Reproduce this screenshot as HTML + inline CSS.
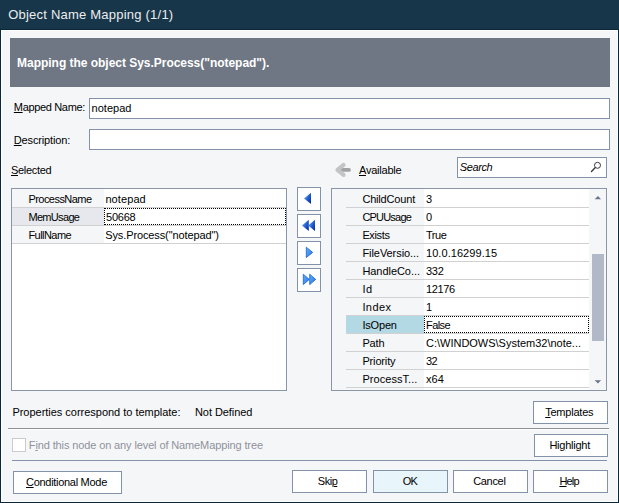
<!DOCTYPE html>
<html lang="en">
<head>
<meta charset="utf-8">
<title>Object Name Mapping (1/1)</title>
<style>
*{box-sizing:border-box;margin:0;padding:0}
html,body{width:619px;height:503px;overflow:hidden;background:#17364a}
body{position:relative;font-family:"Liberation Sans",sans-serif;font-size:11px;color:#000;line-height:13px}
.abs{position:absolute}
.t{position:absolute;white-space:nowrap;line-height:13px;height:13px}
u{text-decoration:underline;text-underline-offset:1px;text-decoration-thickness:1px}
#win{left:0;top:0;width:619px;height:503px;background:#0b283b}
#title{left:0;top:0;width:619px;height:29px;background:#17364a}
#titletx{left:9px;top:7px;font-size:13px;line-height:16px;height:16px;color:#ededed}
#body{left:1px;top:30px;width:617px;height:472px;background:#f5f6f8;border:1px solid #fff}
#banner{left:10px;top:38px;width:600px;height:49px;background:#6f7784}
#bannertx{left:18px;top:57px;color:#fff;font-weight:bold;font-size:12px}
.inp{position:absolute;background:#fff;border:1px solid #8391a9}
.btn{position:absolute;background:#fff;border:1px solid #8391a9;height:23px;text-align:left;line-height:21px;white-space:nowrap;overflow:hidden}
.sq{position:absolute;background:#fff;border:1px solid #8391a9;width:24px;height:24px;left:297px}
.sq svg{position:absolute;left:0;top:0}
.grid{position:absolute;border:1px solid #8a96a8;background:#fff;overflow:hidden}
.hl{position:absolute;height:1px;background:#d1d1d2}
.sep{position:absolute;height:1px}
.foc{position:absolute;border:1px dotted #000}
/*FIT*/
#titletx{letter-spacing:0.22px;text-indent:-0.8px}
#bannertx{letter-spacing:-0.03px;text-indent:-0.9px}
#l1{letter-spacing:-0.34px;text-indent:-0.2px}
#v1{letter-spacing:0.00px;text-indent:-0.4px}
#l2{letter-spacing:-0.15px;text-indent:-0.2px}
#l3{letter-spacing:-0.31px;text-indent:0.0px}
#l4{letter-spacing:-0.22px;text-indent:0.0px}
#srch{letter-spacing:-0.40px;text-indent:-0.2px}
#ln1{letter-spacing:-0.54px;text-indent:0.4px}
#lv1{letter-spacing:0.09px;text-indent:-0.6px}
#ln2{letter-spacing:-0.67px;text-indent:0.4px}
#lv2{letter-spacing:-0.22px;text-indent:-1.0px}
#ln3{letter-spacing:-0.54px;text-indent:0.4px}
#lv3{letter-spacing:-0.11px;text-indent:-0.8px}
#rn1{letter-spacing:-0.18px;text-indent:0.4px}
#rn2{letter-spacing:-0.80px;text-indent:0.4px}
#rn3{letter-spacing:-0.36px;text-indent:0.4px}
#rn4{letter-spacing:-0.06px;text-indent:0.4px}
#rn5{letter-spacing:-0.05px;text-indent:0.4px}
#rn6{letter-spacing:0.54px;text-indent:0.4px}
#rn7{letter-spacing:0.41px;text-indent:0.4px}
#rn8{letter-spacing:-0.18px;text-indent:0.4px}
#rn9{letter-spacing:-0.12px;text-indent:0.4px}
#rn10{letter-spacing:-0.15px;text-indent:0.4px}
#rn11{letter-spacing:0.05px;text-indent:0.4px}
#rv3{letter-spacing:-0.48px;text-indent:0.0px}
#rv4{letter-spacing:0.06px;text-indent:0.0px}
#rv5{letter-spacing:-0.27px;text-indent:0.0px}
#rv6{letter-spacing:-0.36px;text-indent:0.0px}
#rv8{letter-spacing:-0.59px;text-indent:0.0px}
#rv9{letter-spacing:-0.01px;text-indent:0.0px}
#rv10{letter-spacing:-0.72px;text-indent:0.0px}
#rv11{letter-spacing:0.09px;text-indent:0.0px}
#b1{letter-spacing:-0.02px;text-indent:0.4px}
#b2{letter-spacing:-0.07px;text-indent:0.0px}
#b3{letter-spacing:-0.12px;text-indent:-1.2px}
#btpl{letter-spacing:-0.22px;text-indent:11.2px}
#bhl{letter-spacing:-0.25px;text-indent:14.4px}
#bcm{letter-spacing:-0.29px;text-indent:12.0px}
#bskip{letter-spacing:-0.48px;text-indent:24.8px}
#bok{letter-spacing:-0.80px;text-indent:28.8px}
#bcan{letter-spacing:-0.32px;text-indent:19.2px}
#bhelp{letter-spacing:-0.80px;text-indent:25.4px}
/*ENDFIT*/
</style>
</head>
<body>
<div id="win" class="abs"></div>
<div id="title" class="abs"></div>
<div id="titletx" class="t">Object Name Mapping (1/1)</div>
<div id="body" class="abs"></div>

<div id="banner" class="abs"></div>
<div id="bannertx" class="t">Mapping the object Sys.Process("notepad").</div>

<!-- fields -->
<div class="t" id="l1" style="left:14px;top:101px"><u>M</u>apped Name:</div>
<div class="inp" style="left:89px;top:98px;width:521px;height:21px"></div>
<div class="t" id="v1" style="left:92px;top:102px">notepad</div>
<div class="t" id="l2" style="left:14px;top:134px"><u>D</u>escription:</div>
<div class="inp" style="left:89px;top:129px;width:521px;height:21px"></div>

<!-- selected header -->
<div class="t" id="l3" style="left:11px;top:164px"><u>S</u>elected</div>

<!-- available header -->
<svg class="abs" style="left:330px;top:158px" width="28" height="24" viewBox="0 0 28 24">
  <path d="M12 11.9 H19" fill="none" stroke="#a2a2a2" stroke-width="3.8" stroke-linecap="round"/>
  <path d="M13.6 6.9 L7.4 11.9 L13.6 16.9" fill="none" stroke="#c4c4c4" stroke-width="4" stroke-linecap="round" stroke-linejoin="round"/>
</svg>
<div class="t" id="l4" style="left:359px;top:164px"><u>A</u>vailable</div>
<div class="inp" style="left:457px;top:157px;width:150px;height:21px"></div>
<div class="t" id="srch" style="left:460px;top:161px;font-style:italic">Search</div>
<svg class="abs" style="left:590px;top:161px" width="12" height="12" viewBox="0 0 12 12">
  <circle cx="7.5" cy="4.3" r="3" fill="none" stroke="#3a3a3a" stroke-width="1"/>
  <path d="M5.1 6.8 L1.5 10.4" stroke="#3a3a3a" stroke-width="1.4" stroke-linecap="round"/>
</svg>

<!-- left grid -->
<div class="grid" id="lg" style="left:11px;top:188px;width:276px;height:203px">
  <div class="abs" style="left:0;top:0;width:92px;height:54px;background:#f5f6f8"></div>
  <div class="abs" style="left:0;top:19px;width:92px;height:17px;background:#e6e8ed"></div>
  <div class="hl" style="left:0;top:18px;width:274px"></div>
  <div class="hl" style="left:0;top:36px;width:274px"></div>
  <div class="hl" style="left:0;top:54px;width:274px"></div>
  <div class="foc" style="left:92px;top:19px;width:182px;height:17px"></div>
</div>
<div class="t" id="ln1" style="left:28px;top:193px">ProcessName</div>
<div class="t" id="lv1" style="left:106px;top:193px">notepad</div>
<div class="t" id="ln2" style="left:28px;top:211px">MemUsage</div>
<div class="t" id="lv2" style="left:107px;top:211px">50668</div>
<div class="t" id="ln3" style="left:28px;top:229px">FullName</div>
<div class="t" id="lv3" style="left:106px;top:229px">Sys.Process("notepad")</div>

<!-- middle buttons -->
<div class="sq" style="top:187px"><svg width="22" height="22" viewBox="0 0 22 22"><defs><linearGradient id="g" x1="0" y1="0.1" x2="1" y2="0.9"><stop offset="0.15" stop-color="#5a9cee"/><stop offset="0.6" stop-color="#1f58cc"/><stop offset="1" stop-color="#0428a6"/></linearGradient><linearGradient id="g2" x1="0" y1="0" x2="1" y2="0.8"><stop offset="0" stop-color="#62aefa"/><stop offset="1" stop-color="#2c7ae6"/></linearGradient></defs><path d="M6 10.4 L13 4.8 V16 Z" fill="url(#g)"/></svg></div>
<div class="sq" style="top:214px"><svg width="22" height="22" viewBox="0 0 22 22"><path d="M4 10.4 L10.8 4.8 V16 Z" fill="url(#g)"/><path d="M10.2 10.4 L17 4.8 V16 Z" fill="url(#g)"/></svg></div>
<div class="sq" style="top:241px"><svg width="22" height="22" viewBox="0 0 22 22"><path d="M14.7 10.4 L8.3 5.2 V15.6 Z" fill="url(#g2)" stroke="#1862d2" stroke-width="0.8" stroke-linejoin="round"/></svg></div>
<div class="sq" style="top:268px"><svg width="22" height="22" viewBox="0 0 22 22"><path d="M11.3 10.4 L5.3 5.2 V15.6 Z" fill="url(#g2)" stroke="#1862d2" stroke-width="0.8" stroke-linejoin="round"/><path d="M17.7 10.4 L11.7 5.2 V15.6 Z" fill="url(#g2)" stroke="#1862d2" stroke-width="0.8" stroke-linejoin="round"/></svg></div>

<!-- right grid -->
<div class="grid" id="rg" style="left:331px;top:188px;width:276px;height:203px">
  <div class="abs" style="left:0;top:0;width:92px;height:201px;background:#f5f6f8"></div>
  <div class="abs" style="left:14px;top:127px;width:78px;height:17px;background:#b2d9e4"></div>
  <div class="abs" style="left:257px;top:0;width:17px;height:201px;background:#f5f6f8"></div>
  <div class="abs" style="left:260px;top:65px;width:12px;height:87px;background:#b1b8c8"></div>
  <svg class="abs" style="left:262px;top:6px" width="8" height="5" viewBox="0 0 8 5"><path d="M0.7 4.3 L3.9 1 L7.1 4.3 Z" fill="#6a758a"/></svg>
  <svg class="abs" style="left:262px;top:190px" width="8" height="6" viewBox="0 0 8 6"><path d="M0.7 1.2 L3.9 4.5 L7.1 1.2 Z" fill="#6a758a"/></svg>
  <div class="hl" style="left:14px;top:18px;width:243px"></div>
  <div class="hl" style="left:14px;top:36px;width:243px"></div>
  <div class="hl" style="left:14px;top:54px;width:243px"></div>
  <div class="hl" style="left:14px;top:72px;width:243px"></div>
  <div class="hl" style="left:14px;top:90px;width:243px"></div>
  <div class="hl" style="left:14px;top:108px;width:243px"></div>
  <div class="hl" style="left:14px;top:126px;width:243px"></div>
  <div class="hl" style="left:14px;top:144px;width:243px"></div>
  <div class="hl" style="left:14px;top:162px;width:243px"></div>
  <div class="hl" style="left:14px;top:180px;width:243px"></div>
  <div class="hl" style="left:14px;top:198px;width:243px"></div>
  <div class="foc" style="left:92px;top:127px;width:165px;height:17px"></div>
</div>
<div class="t" id="rn1" style="left:362px;top:193px">ChildCount</div>
<div class="t" id="rv1" style="left:426px;top:193px">3</div>
<div class="t" id="rn2" style="left:362px;top:211px">CPUUsage</div>
<div class="t" id="rv2" style="left:426px;top:211px">0</div>
<div class="t" id="rn3" style="left:362px;top:229px">Exists</div>
<div class="t" id="rv3" style="left:426px;top:229px">True</div>
<div class="t" id="rn4" style="left:362px;top:247px">FileVersio...</div>
<div class="t" id="rv4" style="left:426px;top:247px">10.0.16299.15</div>
<div class="t" id="rn5" style="left:362px;top:265px">HandleCo...</div>
<div class="t" id="rv5" style="left:426px;top:265px">332</div>
<div class="t" id="rn6" style="left:362px;top:283px">Id</div>
<div class="t" id="rv6" style="left:426px;top:283px">12176</div>
<div class="t" id="rn7" style="left:362px;top:301px">Index</div>
<div class="t" id="rv7" style="left:426px;top:301px">1</div>
<div class="t" id="rn8" style="left:362px;top:319px">IsOpen</div>
<div class="t" id="rv8" style="left:426px;top:319px">False</div>
<div class="t" id="rn9" style="left:362px;top:337px">Path</div>
<div class="t" id="rv9" style="left:426px;top:337px">C:\WINDOWS\System32\note...</div>
<div class="t" id="rn10" style="left:362px;top:355px">Priority</div>
<div class="t" id="rv10" style="left:426px;top:355px">32</div>
<div class="t" id="rn11" style="left:362px;top:373px">ProcessT...</div>
<div class="t" id="rv11" style="left:426px;top:373px">x64</div>

<!-- bottom -->
<div class="t" id="b1" style="left:12px;top:406px">Properties correspond to template:</div>
<div class="t" id="b2" style="left:195px;top:406px">Not Defined</div>
<div class="btn" id="btpl" style="left:533px;top:401px;width:75px"><u>T</u>emplates</div>
<div class="sep" style="left:8px;top:428px;width:601px;background:#8f9094"></div>
<div class="sep" style="left:8px;top:429px;width:601px;background:#fff"></div>
<div class="abs" style="left:12px;top:438px;width:14px;height:14px;background:#fff;border:1px solid #cbcbcb"></div>
<div class="t" id="b3" style="left:30px;top:439px;color:#8f929b">F<u>i</u>nd this node on any level of NameMapping tree</div>
<div class="btn" id="bhl" style="left:534px;top:434px;width:74px">Hi<u>g</u>hlight</div>
<div class="sep" style="left:12px;top:460px;width:595px;background:#8391a9"></div>
<div class="btn" id="bcm" style="left:13px;top:471px;width:109px"><u>C</u>onditional Mode</div>
<div class="btn" id="bskip" style="left:292px;top:470px;width:75px">Ski<u>p</u></div>
<div class="btn" id="bok" style="left:373px;top:470px;width:75px;background:#e8f6fc">OK</div>
<div class="btn" id="bcan" style="left:453px;top:470px;width:75px">Cancel</div>
<div class="btn" id="bhelp" style="left:533px;top:470px;width:75px"><u>H</u>elp</div>
</body>
</html>
